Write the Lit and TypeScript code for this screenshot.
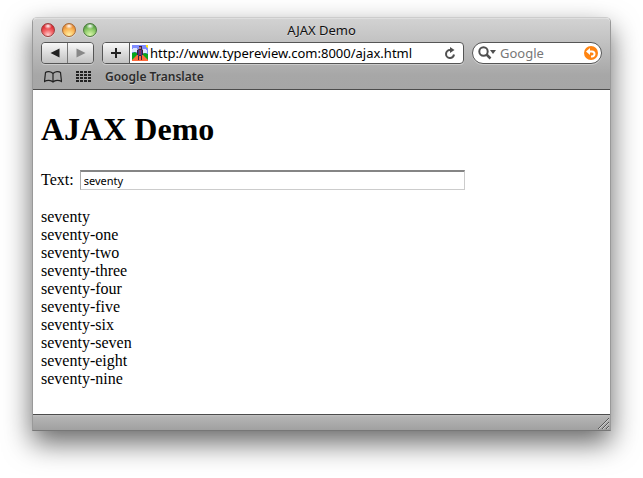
import { LitElement, html, css, svg } from "lit";
import { customElement, state } from "lit/decorators.js";

const WORDS = ["", "-one", "-two", "-three", "-four", "-five", "-six", "-seven", "-eight", "-nine"].map(
  (s) => "seventy" + s
);

const GRID_COLUMNS = [0, 4, 8, 12];
const GRID_ROWS = [0, 3, 6, 9];

@customElement("browser-toolbar")
export class BrowserToolbar extends LitElement {
  static styles = css`
    :host {
      display: block;
      color: #111;
      font: 13px/16px "Noto Sans", "Open Sans", sans-serif;
      background: linear-gradient(#d2d2d2, #c4c4c4 20px, #a7a7a7 56px, #a6a6a6);
      border-top: 1px solid #dedede;
      border-bottom: 1px solid #4c4c4c;
      border-radius: 4px 4px 0 0;
    }
    .title-bar {
      display: grid;
      grid-template-columns: 1fr auto 1fr;
      align-items: center;
      height: 21px;
      padding: 0 8px 2px;
    }
    .title {
      text-shadow: 0 1px 0 #dcdcdc;
    }
    .lights {
      display: flex;
      gap: 7px;
    }
    button {
      border: 0;
      padding: 0;
      margin: 0;
      background: none;
      display: flex;
      align-items: center;
      justify-content: center;
      color: inherit;
      font: inherit;
    }
    svg {
      display: block;
    }
    .light {
      width: 14px;
      height: 14px;
      border-radius: 50%;
      border: 1px solid;
      box-sizing: border-box;
      box-shadow: 0 1px 0 #dadada;
    }
    .close {
      border-color: #9b3d3d;
      background: radial-gradient(ellipse 4px 3px at 6px 2px, #fff, #fff0),
        radial-gradient(circle at 6px 11px, #ffd0d0, #f3676a 5px, #d8222a 10px);
    }
    .minimize {
      border-color: #a96a35;
      background: radial-gradient(ellipse 4px 3px at 6px 2px, #fff, #fff0),
        radial-gradient(circle at 6px 11px, #fff2a6, #fbb758 6px, #dc7a26 11px);
    }
    .zoom {
      border-color: #4c7a3c;
      background: radial-gradient(ellipse 4px 3px at 6px 2px, #fff, #fff0),
        radial-gradient(circle at 6px 11px, #dcf8ac, #8fcb69 6px, #45913a 11px);
    }
    .nav {
      display: flex;
      align-items: center;
      padding: 0 8px;
      gap: 8px;
    }
    .group,
    .address,
    .search {
      display: flex;
      box-sizing: border-box;
      height: 22px;
      border: 1px solid #555;
      border-radius: 4px;
      box-shadow: 0 1px 0 #cbcbcb;
      overflow: hidden;
    }
    .group {
      width: 53px;
    }
    .group button,
    .add {
      box-sizing: border-box;
      background: linear-gradient(#f8f8f8, #dcdcdc 50%, #c2c2c2);
    }
    .group button {
      flex: 1;
    }
    .group button + button {
      border-left: 1px solid #777;
    }
    .add {
      width: 27px;
      border-right: 1px solid #555;
      flex: none;
    }
    .address {
      flex: 1;
      min-width: 0;
      background: #fff;
      align-items: stretch;
    }
    .favicon {
      align-self: center;
      margin: 0 2px;
      flex: none;
    }
    input {
      flex: 1;
      min-width: 0;
      border: 0;
      padding: 0;
      background: none;
      outline: none;
      font: inherit;
      color: #000;
    }
    .reload {
      width: 26px;
    }
    .search {
      width: 130px;
      border-radius: 11px;
      background: #fff;
      align-items: center;
      padding: 0 3px 0 5px;
      gap: 4px;
    }
    .search input::placeholder {
      color: #777;
      opacity: 1;
    }
    .bookmarks {
      display: flex;
      align-items: center;
      height: 25px;
      padding: 0 11px;
      gap: 14px;
    }
    .bookmarks a {
      color: #2c2c2c;
      font-size: 12px;
      font-weight: 600;
      text-decoration: none;
      text-shadow: 0 1px 0 #c4c4c4;
    }
  `;

  render() {
    return html`
      <div class="title-bar">
        <div class="lights">
          <button class="light close" aria-label="Close"></button>
          <button class="light minimize" aria-label="Minimize"></button>
          <button class="light zoom" aria-label="Zoom"></button>
        </div>
        <div class="title">AJAX Demo</div>
      </div>
      <div class="nav">
        <div class="group">
          <button aria-label="Back">
            <svg width="10" height="10"><path d="M0.5 5L9.5 0.5v9z" fill="#222" /></svg>
          </button>
          <button aria-label="Forward">
            <svg width="10" height="10"><path d="M9.5 5L.5 .5v9z" fill="#888" /></svg>
          </button>
        </div>
        <div class="address">
          <button class="add" aria-label="Add bookmark">
            <svg width="12" height="12"><path d="M6 1v10M1 6h10" stroke="#222" stroke-width="2" /></svg>
          </button>
          <svg class="favicon" width="16" height="16" viewBox="0 0 16 16">
            <path fill="#7f8cff" d="M0 0h16v9H0z" />
            <path fill="#dfe6ff" d="M1 3h4v1h1v3H0V4h1zM10 4h4v1h1v3h-5z" />
            <path fill="#ffe818" d="M14 0h2v3h-1V2h-1z" />
            <path fill="#08a51c" d="M0 8l3-1 3 2h4l3-1 3 1v7H0z" />
            <path fill="#ff6b3d" d="M6 9h4l6 6v1H0v-1z" />
            <path fill="#40233f" d="M7 1h3v3l1 1v5h-1v5H9v-4H7v4H6v-5H5V5l2-1z" />
            <path fill="#a87878" d="M7 2h2v2H7z" />
            <path fill="#8f2d68" d="M7 5h2v5H7z" />
            <path fill="#3c3c88" d="M6 5h1v6H6zM9 5h1v6H9z" />
          </svg>
          <input aria-label="Address" .value=${"http://www.typereview.com:8000/ajax.html"} />
          <button class="reload" aria-label="Reload">
            <svg width="12" height="13" viewBox="0 0 12 13">
              <path d="M7 3H6a4 4 0 1 0 4 4.500" fill="none" stroke="#505050" stroke-width="2" />
              <path d="M6 0l4.500 3L6 6z" fill="#505050" />
            </svg>
          </button>
        </div>
        <div class="search">
          <svg width="18" height="14" viewBox="0 0 18 14">
            <circle cx="5.500" cy="5.500" r="4.200" fill="none" stroke="#505050" stroke-width="2" />
            <path d="M8.500 8.500l4 4" stroke="#505050" stroke-width="2.500" />
            <path d="M12 4h6l-3 4z" fill="#505050" />
          </svg>
          <input aria-label="Search" placeholder="Google" />
          <button aria-label="Snap back">
            <svg width="14" height="14" viewBox="0 0 14 14">
              <circle cx="7" cy="7" r="7" fill="#ff8412" />
              <path d="M5 5.500h3a2.500 2.500 0 0 1 0 5H7" fill="none" stroke="#fff" stroke-width="2" />
              <path d="M2 5.500l4-3.500v7z" fill="#fff" />
            </svg>
          </button>
        </div>
      </div>
      <div class="bookmarks">
        <button aria-label="Show all bookmarks">
          <svg width="18" height="12" viewBox="0 0 18 12">
            <path
              d="M9 2.500C7 .2 3 .2 1.500 1.500L.5 10.500C3 9 7 9 9 11C11 9 15 9 17.500 10.500L16.500 1.500C15 .2 11 .2 9 2.500V11"
              fill="none"
              stroke="#222"
              stroke-width="1.200"
            />
          </svg>
        </button>
        <button aria-label="Show top sites">
          <svg width="15" height="12">
            ${GRID_ROWS.map((y) =>
              GRID_COLUMNS.map((x) => svg`<rect x=${x} y=${y} width="3" height="2" fill="#222" />`)
            )}
          </svg>
        </button>
        <a href="#translate">Google Translate</a>
      </div>
    `;
  }
}

@customElement("app-root")
export class AppRoot extends LitElement {
  static styles = css`
    :host {
      display: block;
      box-sizing: border-box;
      min-height: 100vh;
      padding: 17px 32px 40px;
      background: #fff;
      overflow: hidden;
    }
    .window {
      border: 1px solid #999;
      border-top-color: #ccc;
      border-bottom-color: #777;
      border-radius: 5px 5px 0 0;
      background: #fff;
      box-shadow: 0 12px 28px rgba(0, 0, 0, 0.6);
    }
    main {
      padding: 20px 8px 26px;
      color: #000;
      font: 16px/18px "Liberation Serif", serif;
    }
    h1 {
      margin: 0 0 22px;
      font-size: 32px;
      line-height: 38px;
    }
    .field {
      display: flex;
      align-items: center;
      gap: 6px;
      margin-bottom: 18px;
    }
    .field input {
      box-sizing: border-box;
      width: 385px;
      max-width: 80%;
      height: 20px;
      padding: 0 3px;
      border: 1px solid #ccc;
      border-top: 2px solid #858585;
      border-left-color: #aaa;
      outline: none;
      font: 11px/14px "Noto Sans", "Open Sans", sans-serif;
      color: #000;
    }
    ul {
      list-style: none;
      margin: 0;
      padding: 0;
    }
    footer {
      display: flex;
      justify-content: flex-end;
      align-items: flex-end;
      height: 15px;
      border-top: 1px solid #4c4c4c;
      background: linear-gradient(#c2c2c2, #b4b4b4 2px, #a0a0a0);
    }
    .grip {
      display: block;
      margin: 0 1px 1px 0;
    }
  `;

  @state() private query = "seventy";

  private onInput(e: InputEvent) {
    this.query = (e.target as HTMLInputElement).value;
  }

  render() {
    return html`
      <div class="window">
        <browser-toolbar></browser-toolbar>
        <main>
          <h1>AJAX Demo</h1>
          <div class="field">
            <label for="text">Text:</label>
            <input id="text" type="text" .value=${this.query} @input=${this.onInput} />
          </div>
          <ul>
            ${WORDS.filter((w) => w.startsWith(this.query)).map((w) => html`<li>${w}</li>`)}
          </ul>
        </main>
        <footer>
          <svg class="grip" width="12" height="12">
            <path d="M1 12L12 1M5 12l7-7M9 12l3-3" stroke="#555" />
            <path d="M2 12L12 2M6 12l6-6M10 12l2-2" stroke="#d0d0d0" />
          </svg>
        </footer>
      </div>
    `;
  }
}
